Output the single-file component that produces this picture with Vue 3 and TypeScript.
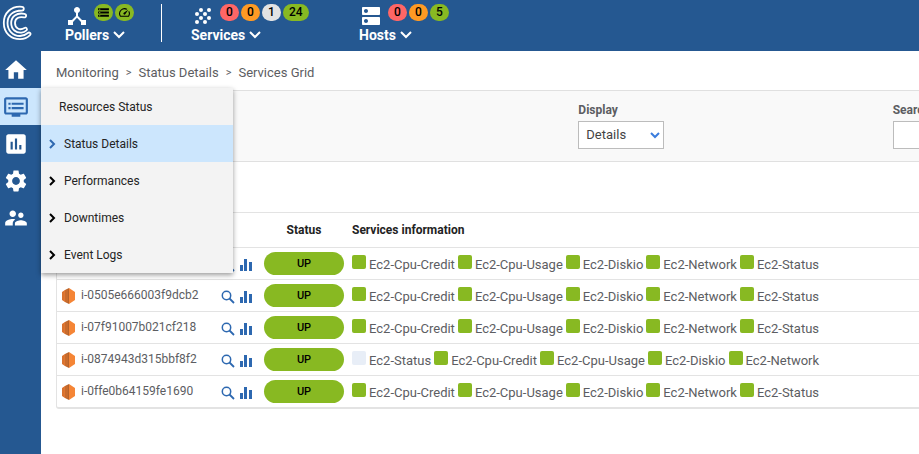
<script setup lang="ts">
interface Badge { text: string; tone: string }
interface Host { id: string; services: string[]; pending?: string }

const icons = {
  hub: 'M17 16l-4-4V8.82C14.16 8.4 15 7.3 15 6c0-1.66-1.34-3-3-3S9 4.34 9 6c0 1.3.84 2.4 2 2.82V12l-4 4H3v5h5v-3.05l4-4.2 4 4.2V21h5v-5h-4z',
  dns: 'M20 13H4c-.55 0-1 .45-1 1v6c0 .55.45 1 1 1h16c.55 0 1-.45 1-1v-6c0-.55-.45-1-1-1zM7 19c-1.1 0-2-.9-2-2s.9-2 2-2 2 .9 2 2-.9 2-2 2zM20 3H4c-.55 0-1 .45-1 1v6c0 .55.45 1 1 1h16c.55 0 1-.45 1-1V4c0-.55-.45-1-1-1zM7 9c-1.1 0-2-.9-2-2s.9-2 2-2 2 .9 2 2-.9 2-2 2z',
  storage: 'M2 20h20v-4H2v4zm2-3h2v2H4v-2zM2 4v4h20V4H2zm4 3H4V5h2v2zm-4 7h20v-4H2v4zm2-3h2v2H4v-2z',
  speed: 'M20.38 8.57l-1.23 1.85a8 8 0 0 1-.22 7.58H5.07A8 8 0 0 1 15.58 6.85l1.85-1.23A10 10 0 0 0 3.35 19a2 2 0 0 0 1.72 1h13.85a2 2 0 0 0 1.74-1 10 10 0 0 0-.27-10.44zm-9.79 6.84a2 2 0 0 0 2.83 0l5.66-8.49-8.49 5.66a2 2 0 0 0 0 2.83z',
}

const grain = [[6, 10], [6, 18], [10, 6], [10, 14], [14, 10], [14, 18], [18, 6], [18, 14]]

const nav = [
  { label: 'Home', path: 'M10 20v-6h4v6h5v-8h3L12 3 2 12h3v8z' },
  { label: 'Monitoring', active: true, path: 'M21 3H3c-1.1 0-2 .9-2 2v12c0 1.1.9 2 2 2h5v2h8v-2h5c1.1 0 1.99-.9 1.99-2L23 5c0-1.1-.9-2-2-2zm0 14H3V5h18v12zm-2-9H8v2h11V8zm0 4H8v2h11v-2zM7 8H5v2h2V8zm0 4H5v2h2v-2z' },
  { label: 'Reporting', path: 'M19 3H5c-1.1 0-2 .9-2 2v14c0 1.1.9 2 2 2h14c1.1 0 2-.9 2-2V5c0-1.1-.9-2-2-2zM9 17H7v-7h2v7zm4 0h-2V7h2v10zm4 0h-2v-4h2v4z' },
  { label: 'Configuration', path: 'M19.14 12.94c.04-.3.06-.61.06-.94 0-.32-.02-.64-.07-.94l2.03-1.58c.18-.14.23-.41.12-.61l-1.92-3.32c-.12-.22-.37-.29-.59-.22l-2.39.96c-.5-.38-1.03-.7-1.62-.94l-.36-2.54c-.04-.24-.24-.41-.48-.41h-3.84c-.24 0-.43.17-.47.41l-.36 2.54c-.59.24-1.13.57-1.62.94l-2.39-.96c-.22-.08-.47 0-.59.22L2.74 8.87c-.12.21-.08.47.12.61l2.03 1.58c-.05.3-.09.63-.09.94s.02.64.07.94l-2.03 1.58c-.18.14-.23.41-.12.61l1.92 3.32c.12.22.37.29.59.22l2.39-.96c.5.38 1.03.7 1.62.94l.36 2.54c.05.24.24.41.48.41h3.84c.24 0 .44-.17.47-.41l.36-2.54c.59-.24 1.13-.56 1.62-.94l2.39.96c.22.08.47 0 .59-.22l1.92-3.32c.12-.22.07-.47-.12-.61l-2.01-1.58zM12 15.6c-1.98 0-3.6-1.62-3.6-3.6s1.62-3.6 3.6-3.6 3.6 1.62 3.6 3.6-1.62 3.6-3.6 3.6z' },
  { label: 'Administration', path: 'M16.5 12c1.38 0 2.49-1.12 2.49-2.5S17.88 7 16.5 7C15.12 7 14 8.12 14 9.5s1.12 2.5 2.5 2.5zM9 11c1.66 0 2.99-1.34 2.99-3S10.66 5 9 5C7.34 5 6 6.34 6 8s1.34 3 3 3zm7.5 3c-1.83 0-5.5.92-5.5 2.75V19h11v-2.25c0-1.83-3.67-2.75-5.5-2.75zM9 13c-2.33 0-7 1.17-7 3.5V19h7v-2.25c0-.85.33-2.34 2.37-3.47C10.5 13.1 9.66 13 9 13z' },
]

const menu = ['Status Details', 'Performances', 'Downtimes', 'Event Logs']
const serviceBadges: Badge[] = [
  { text: '0', tone: 'critical' }, { text: '0', tone: 'warning' }, { text: '1', tone: 'unknown' }, { text: '24', tone: 'ok' },
]
const hostBadges: Badge[] = [
  { text: '0', tone: 'critical' }, { text: '0', tone: 'warning' }, { text: '5', tone: 'ok' },
]

const usual = ['Ec2-Cpu-Credit', 'Ec2-Cpu-Usage', 'Ec2-Diskio', 'Ec2-Network', 'Ec2-Status']
const hosts: Host[] = [
  { id: '', services: usual },
  { id: 'i-0505e666003f9dcb2', services: usual },
  { id: 'i-07f91007b021cf218', services: usual },
  { id: 'i-0874943d315bbf8f2', services: ['Ec2-Status', 'Ec2-Cpu-Credit', 'Ec2-Cpu-Usage', 'Ec2-Diskio', 'Ec2-Network'], pending: 'Ec2-Status' },
  { id: 'i-0ffe0b64159fe1690', services: usual },
]
</script>

<template>
  <div class="app">
    <header class="topbar">
      <a class="logo" href="#" aria-label="Home page">
        <svg width="30" height="36" viewBox="0 0 30 36" fill="none" stroke="#fff" stroke-width="1.8" stroke-linecap="round" stroke-linejoin="round">
          <path d="M20 1.8C9 .8 1.8 8 1.8 18S9 34.2 18 34.2c4 0 7.5-1.4 10-4 1.4-1.6-.6-3.6-2.2-2.2C23.5 30 21 31 18 31 11 31 5.5 25.5 5.5 18S11 5.5 20 5.5c2.4-.2 2.4-3.5 0-3.7z" />
          <path d="M22.5 8.800C14.5 7.3 9.2 11.5 9.2 18s5 10.2 10.3 9.6c2-.2 3.5-1 5-2.2 1.3-1.5-.3-3.4-2-2.4-5 3-9.500 0-9.500-5 0-4.400 4-6.800 9-5.600 2.600.4 2.900-3 .5-3.600z" />
        </svg>
      </a>
      <section class="group pollers">
        <div class="row">
          <svg class="big" viewBox="0 0 24 24"><path :d="icons.hub" /></svg>
          <span class="badge round"><svg viewBox="0 0 24 24"><path :d="icons.storage" /></svg></span>
          <span class="badge round"><svg viewBox="0 0 24 24"><path :d="icons.speed" /></svg></span>
        </div>
        <button type="button">Pollers<svg class="down" viewBox="0 0 12 8"><path d="M1 1l5 5 5-5" /></svg></button>
      </section>
      <section class="group services">
        <div class="row">
          <svg class="big" viewBox="0 0 24 24"><circle v-for="(p, i) in grain" :key="i" :cx="p[0]" :cy="p[1]" r="2" /></svg>
          <span v-for="(b, i) in serviceBadges" :key="i" class="badge" :class="b.tone">{{ b.text }}</span>
        </div>
        <button type="button">Services<svg class="down" viewBox="0 0 12 8"><path d="M1 1l5 5 5-5" /></svg></button>
      </section>
      <section class="group">
        <div class="row">
          <svg class="big" viewBox="0 0 24 24"><path :d="icons.dns" /></svg>
          <span v-for="(b, i) in hostBadges" :key="i" class="badge" :class="b.tone">{{ b.text }}</span>
        </div>
        <button type="button">Hosts<svg class="down" viewBox="0 0 12 8"><path d="M1 1l5 5 5-5" /></svg></button>
      </section>
    </header>

    <div class="body">
      <nav class="side">
        <a v-for="n in nav" :key="n.label" href="#" :aria-label="n.label" :class="{ active: n.active }">
          <svg viewBox="0 0 24 24"><path :d="n.path" /></svg>
        </a>
        <div class="menu">
          <a href="#" class="plain">Resources Status</a>
          <a v-for="(m, i) in menu" :key="m" href="#" :class="{ current: i === 0 }">
            <svg viewBox="0 0 8 12"><path d="M2 2l4 4-4 4" /></svg>{{ m }}
          </a>
        </div>
      </nav>

      <main>
        <div class="crumbs">
          <a href="#">Monitoring</a><span>&gt;</span><a href="#">Status Details</a><span>&gt;</span><a href="#">Services Grid</a>
        </div>
        <form class="filters">
          <div class="field first">
            <label for="display">Display</label>
            <div class="select">
              <select id="display"><option>Details</option></select>
              <svg viewBox="0 0 12 8"><path d="M2 2l4 4 4-4" /></svg>
            </div>
          </div>
          <div class="field">
            <label for="search">Search</label>
            <input id="search" type="text">
          </div>
        </form>
        <div class="frame">
          <table>
            <thead>
              <tr><th class="host"></th><th class="tools"></th><th class="status">Status</th><th class="info">Services information</th></tr>
            </thead>
            <tbody>
              <tr v-for="(h, i) in hosts" :key="i">
                <td class="host">
                  <a href="#" class="name">
                    <svg viewBox="0 0 14 16">
                      <path d="M0 4l3-2v12l-3-2z" fill="#d9722f" />
                      <path d="M3 2l4-2v16l-4-2z" fill="#b5622a" />
                      <path d="M7 0l6 4v8l-6 4z" fill="#f58536" />
                      <path d="M3 2v12M5 1.500v13" stroke="#f58536" stroke-width=".6" />
                    </svg>{{ h.id }}
                  </a>
                </td>
                <td class="tools">
                  <div class="links">
                    <a href="#" aria-label="View services"><svg viewBox="0 0 14 14"><circle cx="5.5" cy="5.5" r="4.2" fill="none" stroke="#2d68b0" stroke-width="1.5" /><path d="M8.5 8.5l4.5 4.5" stroke="#2d68b0" stroke-width="1.8" /></svg></a>
                    <a href="#" aria-label="View graphs"><svg viewBox="0 0 14 14"><path d="M1 7h3v6H1zM5 1h3v12H5zM10 4h3v9h-3z" fill="#2d68b0" /></svg></a>
                  </div>
                </td>
                <td class="status"><span class="pill">UP</span></td>
                <td class="info">
                  <div class="list">
                    <a v-for="s in h.services" :key="s" href="#"><i :class="{ pending: h.pending === s }"></i>{{ s }}</a>
                  </div>
                </td>
              </tr>
            </tbody>
          </table>
        </div>
      </main>
    </div>
  </div>
</template>

<style>
body { background: #fff; overflow: hidden; }
</style>

<style scoped>
* { box-sizing: border-box; }
.app { min-height: 100vh; display: flex; flex-direction: column; font-family: Roboto, "Liberation Sans", sans-serif; font-size: 12px; color: #5c5d62; }
a { color: inherit; text-decoration: none; }
svg { display: block; flex: none; }

.topbar { height: 51px; background: #255891; color: #fff; display: flex; align-items: flex-start; }
.logo { width: 65px; padding: 5px 0 0 2px; }
.group { display: flex; flex-direction: column; margin-top: 4px; }
.pollers { width: 97px; height: 38px; border-right: 1px solid #fff; margin-right: 29px; }
.services { width: 168px; }
.row { display: flex; gap: 2px; height: 24px; align-items: flex-start; }
.big { width: 24px; height: 24px; fill: #fff; margin: 0 3px 0 0; }
.badge { min-width: 19px; height: 17px; padding: 0 6px; border-radius: 9px; background: #88b922; color: #000; font-size: 12px; font-weight: 500; line-height: 17px; text-align: center; }
.badge.critical { background: #ff6666; }
.badge.warning { background: #ff9a24; }
.badge.unknown { background: #e3e3e3; }
.badge.round { padding: 2px 3px; }
.badge.round svg { width: 13px; height: 13px; }
.group button { display: flex; align-items: center; gap: 4px; padding: 0; border: 0; background: none; color: #fff; font: bold 14px/16px Roboto, sans-serif; margin-top: -1px; }
.down { width: 12px; height: 8px; fill: none; stroke: #fff; stroke-width: 2; }

.body { flex: 1; display: flex; }
.side { position: relative; width: 41px; background: #255891; flex: none; }
.side > a { display: flex; align-items: center; height: 37px; padding-left: 3px; }
.side > a svg { width: 26px; height: 26px; fill: #fff; }
.side > a.active { background: #cce6fd; }
.side > a.active svg { fill: #2d68b0; }
.menu { position: absolute; z-index: 2; left: 41px; top: 37px; width: 192px; background: #f3f3f3; color: #242424; box-shadow: 0 2px 5px rgba(0, 0, 0, .4); }
.menu a { display: flex; align-items: center; gap: 8px; height: 37px; padding-left: 7px; }
.menu a.plain { padding-left: 18px; }
.menu a.current { background: #cce6fd; }
.menu svg { width: 8px; height: 12px; fill: none; stroke: #000; stroke-width: 2; }
.menu .current svg { stroke: #2d68b0; }

main { flex: 1; min-width: 0; overflow: hidden; }
.crumbs { display: flex; gap: 7px; height: 39px; padding: 3px 0 0 15px; align-items: center; font-size: 13px; }
.crumbs span { font-size: 11px; }
.filters { display: grid; grid-template-columns: 61.2% 35.8% 120px; padding: 12px 0; background: #f9f9f9; border: solid #e0e0e0; border-width: 1px 0; }
.field { display: flex; flex-direction: column; gap: 4px; align-items: flex-start; }
.field.first { grid-column: 2; }
.field label { font-weight: bold; line-height: 14px; }
.field input { width: 120px; height: 28px; border: 1px solid #bcbcbc; background: #fff; }
.select { position: relative; }
.select select { display: block; appearance: none; width: 86px; height: 28px; padding: 0 7px 2px; border: 1px solid #bcbcbc; border-radius: 0; background: #fff; color: #444; font: 13px Roboto, sans-serif; }
.select svg { position: absolute; right: 3px; top: 10px; width: 12px; height: 8px; fill: none; stroke: #3b7ddd; stroke-width: 2; pointer-events: none; }

.frame { margin: 50px 0 0 15px; border: solid #e3e3e3; border-width: 1px 0 2px 1px; border-radius: 3px 0 0 3px; }
table { width: 100%; border-collapse: collapse; table-layout: fixed; }
th, td { padding: 0; text-align: left; height: 32px; vertical-align: middle; border-top: 1px solid #e3e3e3; }
th { height: 34px; border-top: 0; color: #222; font-weight: bold; }
.host { width: 163px; }
.tools { width: 44px; }
.status { width: 80px; text-align: center; }
.info { padding-left: 8px; }
.name { display: flex; gap: 5px; padding-left: 5px; align-items: center; }
.name svg { width: 14px; height: 16px; margin-top: 2px; }
.links { display: flex; gap: 4px; padding: 4px 0 0 1px; }
.links svg { width: 14px; height: 14px; }
.pill { display: block; height: 23px; border-radius: 12px; background: #88b922; color: #000; font-weight: 500; font-size: 11px; line-height: 23px; }
.list { display: flex; gap: 3px; padding-top: 4px; white-space: nowrap; font-size: 13px; }
.list a { display: flex; gap: 3px; line-height: 20px; }
.list i { width: 14px; height: 14px; border-radius: 2px; background: #88b922; }
.list i.pending { background: #e8eef7; }
</style>
